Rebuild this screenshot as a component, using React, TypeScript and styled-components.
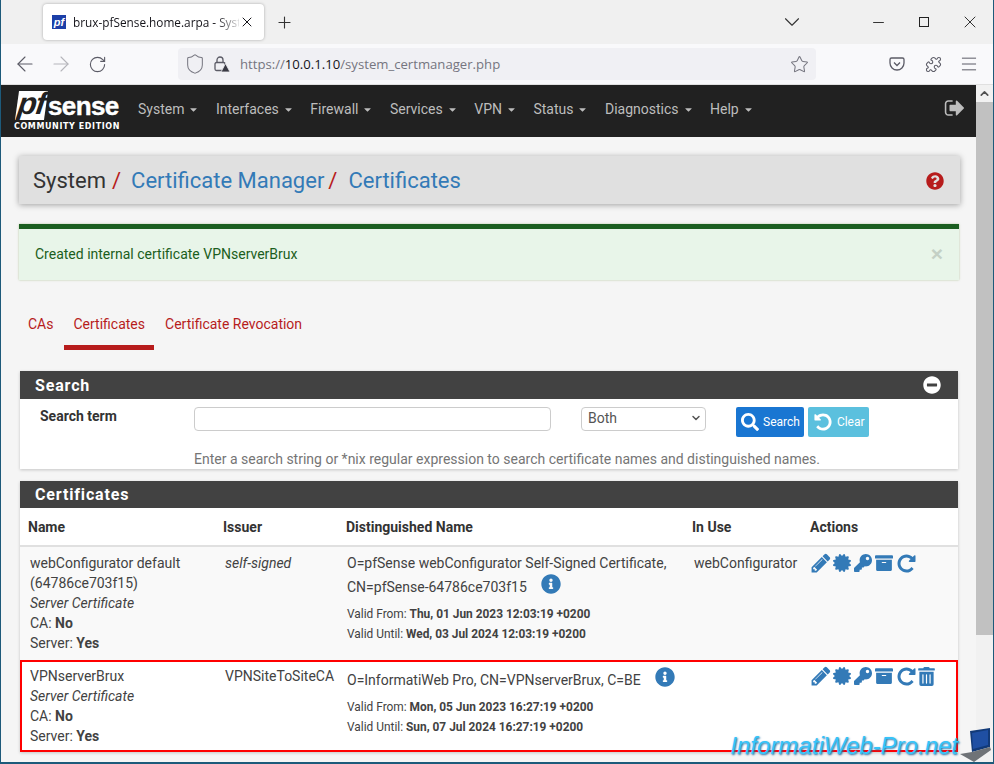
import React from 'react';
import styled, { createGlobalStyle } from 'styled-components';
import { ArrowLeft, ArrowRight, RotateCw, Shield, Star, Puzzle, Menu, ChevronDown, Plus, X, Minus, ChevronUp } from 'lucide-react';
import { FaCertificate, FaKey, FaArchive, FaTrashAlt, FaInfoCircle, FaQuestionCircle, FaMinusCircle, FaSearch, FaCaretDown } from 'react-icons/fa';

const GlobalStyle = createGlobalStyle`
  html, body { margin: 0; padding: 0; overflow: hidden; }
  * { box-sizing: border-box; }
`;

const Frame = styled.div`
  width: 994px;
  height: 764px;
  overflow: hidden;
  position: relative;
  display: flex;
  flex-direction: column;
  border-left: 1px solid #1d5a7a;
  border-right: 1px solid #1d5a7a;
  border-bottom: 2px solid #1d5a7a;
  font-family: Roboto, "Liberation Sans", sans-serif;
  font-size: 14px;
  color: #424242;
  background: #f5f5f5;
`;

const TabStrip = styled.div`
  height: 44px;
  flex: none;
  background: #f0f0f0;
  display: flex;
  align-items: center;
  padding: 0 0 0 42px;
  color: #333;
`;

const BrowserTab = styled.div`
  width: 221px;
  height: 36px;
  background: #fff;
  border-radius: 4px;
  box-shadow: 0 0 3px rgba(0, 0, 0, 0.3);
  display: flex;
  align-items: center;
  padding: 0 9px 0 9px;
  font-family: "Open Sans", "Liberation Sans", sans-serif;
  font-size: 11.8px;
  color: #15141a;
`;

const Favicon = styled.span`
  width: 14px;
  height: 14px;
  flex: none;
  margin-right: 7px;
  background: #1c3fa8;
  color: #fff;
  font: italic 700 11px/14px "Liberation Sans", sans-serif;
  text-align: center;
`;

const TabTitle = styled.span`
  flex: 1;
  min-width: 0;
  white-space: nowrap;
  -webkit-mask-image: linear-gradient(to right, #000 86%, rgba(0, 0, 0, 0.15));
  mask-image: linear-gradient(to right, #000 86%, rgba(0, 0, 0, 0.15));
`;

const TabClose = styled.span`
  display: flex;
  flex: none;
`;

const NewTab = styled.span`
  display: flex;
  margin-left: 11px;
`;

const WindowButtons = styled.div`
  margin-left: auto;
  display: flex;
  align-items: center;
`;

const ListTabs = styled.span`
  display: flex;
  margin-right: 50px;
`;

const WindowButton = styled.span`
  width: 46px;
  display: flex;
  justify-content: center;
`;

const Toolbar = styled.div`
  height: 41px;
  flex: none;
  background: #f9f9fb;
  border-bottom: 1px solid #e0e0e0;
  display: flex;
  align-items: center;
  padding: 0 0 0 6px;
  color: #5b5b66;
`;

const NavButton = styled.span<{ $off?: boolean }>`
  display: flex;
  justify-content: center;
  width: 36px;
  color: ${p => (p.$off ? '#b5b5bb' : '#5b5b66')};
`;

const UrlBar = styled.div`
  width: 638px;
  height: 32px;
  margin-left: 63px;
  background: #f0f0f4;
  border-radius: 4px;
  display: flex;
  align-items: center;
  padding: 0 7px 0 6px;
  font-family: "Open Sans", "Liberation Sans", sans-serif;
  font-size: 13.15px;
  color: #75757f;
`;

const LockIcon = styled.svg`
  margin-left: 7px;
  flex: none;
`;

const UrlText = styled.span`
  flex: 1;
  margin-left: 9px;
  b { font-weight: 400; color: #15141a; }
`;

const ToolIcons = styled.div`
  display: flex;
  align-items: center;
  margin-left: 63px;
`;

const ToolSlot = styled.span`
  width: 36px;
  display: flex;
  justify-content: center;
`;

const Body = styled.div`
  flex: 1;
  display: flex;
  min-height: 0;
`;

const Page = styled.div`
  flex: 1;
  min-width: 0;
  display: flex;
  flex-direction: column;
`;

const Scrollbar = styled.div`
  width: 17px;
  flex: none;
  background: #f1f1f1;
  display: flex;
  flex-direction: column;
  color: #505050;
`;

const ScrollArrow = styled.span`
  height: 17px;
  display: flex;
  align-items: center;
  justify-content: center;
`;

const ScrollThumb = styled.div`
  height: 533px;
  background: #c1c1c1;
`;

const NavBar = styled.div`
  height: 52px;
  flex: none;
  background: #212121;
  display: flex;
  align-items: center;
  padding: 0 10px 0 13px;
  color: #bdbdbd;
`;

const Logo = styled.div`
  width: 106px;
  margin-right: 18px;
  color: #fff;
  display: flex;
  flex-direction: column;
`;

const LogoTop = styled.div`
  display: flex;
  align-items: center;
  height: 31px;
  padding-left: 3px;
`;

const LogoPf = styled.span`
  width: 29px;
  height: 29px;
  background: #fff;
  color: #212121;
  font: italic 700 31px/25px "Liberation Sans", sans-serif;
  transform: skewX(-8deg);
  text-align: center;
  letter-spacing: -1px;
`;

const LogoSense = styled.span`
  font: 700 26px/28px "Liberation Sans", sans-serif;
  letter-spacing: -0.6px;
  margin-left: 2px;
  -webkit-text-stroke: 0.4px #fff;
`;

const LogoSub = styled.div`
  font: 700 8px/10px "DejaVu Sans", sans-serif;
  letter-spacing: 0.6px;
  white-space: nowrap;
  margin-top: 1px;
`;

const Menus = styled.div`
  display: flex;
  flex: 1;
  gap: 16.5px;
  padding-bottom: 4px;
`;

const MenuItem = styled.span`
  display: flex;
  align-items: center;
  gap: 4px;
  font-size: 14px;
`;

const LogoutIcon = styled.svg`
  margin-bottom: 6px;
`;

const Content = styled.div`
  flex: 1;
  padding: 19px 17px 0 18px;
  display: flex;
  flex-direction: column;
`;

const Breadcrumb = styled.div`
  height: 48px;
  flex: none;
  background: #e0e0e0;
  box-shadow: 0 1px 6px rgba(0, 0, 0, 0.35);
  display: flex;
  align-items: center;
  padding: 1px 16px 0 14px;
  font-size: 22px;
  margin-right: -1px;
`;

const Crumb = styled.span<{ $link?: boolean }>`
  color: ${p => (p.$link ? '#337ab7' : '#333')};
`;

const Slash = styled.span<{ $wide?: boolean }>`
  color: #b71c1c;
  margin: ${p => (p.$wide ? '0 11px 0 4px' : '0 10px 0 6px')};
`;

const Help = styled.span`
  margin-left: auto;
  display: flex;
  color: #b71c1c;
`;

const Alert = styled.div`
  height: 56px;
  flex: none;
  margin-top: 20px;
  background: #e8f5e9;
  border-top: 5px solid #1b5e20;
  box-shadow: 0 0 2px rgba(120, 160, 80, 0.5);
  color: #1b5e20;
  display: flex;
  align-items: center;
  justify-content: space-between;
  padding: 0 16px 2px 16px;
`;

const AlertClose = styled.span`
  color: #c4d0c5;
  font: 700 21px/1 "Liberation Sans", sans-serif;
`;

const TabRow = styled.div`
  display: flex;
  height: 91px;
  padding-top: 30px;
  flex: none;
`;

const PageTab = styled.span<{ $active?: boolean }>`
  color: #b71c1c;
  height: 40px;
  padding: 6px 9px 0 9px;
  margin-right: 2px;
  border-bottom: 5px solid ${p => (p.$active ? '#b71c1c' : 'transparent')};
`;

const Panel = styled.div<{ $gap?: number }>`
  flex: none;
  margin: ${p => p.$gap ?? 0}px 1px 0 1px;
  background: #fff;
  box-shadow: 0 1px 3px rgba(0, 0, 0, 0.2);
`;

const PanelHead = styled.div<{ $tall?: boolean }>`
  background: #424242;
  color: #fff;
  height: ${p => (p.$tall ? '28px' : '27px')};
  display: flex;
  align-items: center;
  justify-content: space-between;
  padding: 0 17px 0 15px;
  font-size: 16px;
  font-weight: 700;
  letter-spacing: 0.85px;
`;

const SearchForm = styled.div`
  display: grid;
  grid-template-columns: 154px 387px 155px 1fr;
  padding: 8px 0 0 20px;
  height: 70px;
  align-items: start;
`;

const SearchLabel = styled.label`
  font-weight: 700;
  padding-top: 1px;
  color: #333;
`;

const TextBox = styled.div`
  width: 357px;
  height: 24px;
  border: 1px solid #ccc;
  border-radius: 4px;
  background: #fff;
`;

const SelectBox = styled.div`
  width: 125px;
  height: 24px;
  border: 1px solid #ccc;
  border-radius: 4px;
  display: flex;
  align-items: center;
  justify-content: space-between;
  padding: 0 3px 2px 6px;
  color: #555;
`;

const Buttons = styled.div`
  display: flex;
  gap: 4px;
`;

const ActionButton = styled.span<{ $tone: string }>`
  height: 30px;
  background: ${p => p.$tone};
  color: #fff;
  border-radius: 2px;
  display: flex;
  align-items: center;
  gap: 4px;
  padding: 0 4px 0 5px;
  font-size: 12px;
`;

const SearchHint = styled.div`
  grid-column: 2 / 5;
  color: #757575;
  margin-top: 12px;
  height: 17px;
  white-space: nowrap;
`;

const Grid = styled.div`
  display: grid;
  grid-template-columns: 195px 123px 346px 118px 1fr;
`;

const HeadRow = styled(Grid)`
  height: 39px;
  border-bottom: 2px solid #e0e0e0;
  font-weight: 700;
  padding-left: 8px;
  align-items: center;
  color: #333;
`;

const CertRow = styled(Grid)<{ $hl?: boolean }>`
  padding: ${p => (p.$hl ? '4px 0 0 8px' : '6px 0 0 10px')};
  height: ${p => (p.$hl ? '92px' : '113px')};
  background: ${p => (p.$hl ? '#fff' : '#f9f9f9')};
  border: ${p => (p.$hl ? '2px solid #f00' : '0')};
  line-height: 20px;
`;

const Cell = styled.div`
  min-width: 0;
`;

const DnCell = styled.div<{ $low?: boolean }>`
  min-width: 0;
  margin-left: -1px;
  margin-top: ${p => (p.$low ? '1px' : '-1px')};
`;

const DnLine = styled.div`
  line-height: 22px;
  white-space: nowrap;
`;

const InfoIcon = styled.span<{ $gap: number; $rise: number }>`
  display: inline-flex;
  vertical-align: ${p => p.$rise}px;
  margin-left: ${p => p.$gap}px;
  color: #337ab7;
`;

const Small = styled.div<{ $first?: boolean }>`
  font-size: 11.9px;
  line-height: 20px;
  margin-top: ${p => (p.$first ? '6px' : '0')};
  white-space: nowrap;
`;

const Icons = styled.div`
  display: flex;
  gap: 3px;
  color: #337ab7;
  height: 20px;
  align-items: center;
`;

const PencilSlot = styled.span`
  display: flex;
  margin: 0 -2px;
`;

const TrashSlot = styled.span`
  display: flex;
  margin-left: -3px;
`;

const Watermark = styled.div`
  position: absolute;
  right: 35px;
  bottom: 2px;
  font: italic 400 24px/28px "Liberation Sans", sans-serif;
  color: #35c4fa;
  text-shadow: 1px 1px 2px #1f6fa8;
  white-space: nowrap;
`;

const LaptopBadge = styled.svg`
  position: absolute;
  right: 1px;
  bottom: 0;
`;

const menuNames = ['System', 'Interfaces', 'Firewall', 'Services', 'VPN', 'Status', 'Diagnostics', 'Help'];

const FaGlyph = ({ d, size }: { d: string; size: number }) => (
  <svg width={size} height={size} viewBox="0 0 1792 1792" fill="currentColor">
    <path d={d} />
  </svg>
);

const PENCIL = 'M491 1536l91-91-235-235-91 91v107h128v128h107zm523-928q0-22-22-22-10 0-17 7l-542 542q-7 7-7 17 0 22 22 22 10 0 17-7l542-542q7-7 7-17zm-54-192l416 416-832 832h-416v-416zm683 96q0 53-37 90l-166 166-416-416 166-165q36-38 90-38 53 0 91 38l235 234q37 39 37 91z';
const REPEAT = 'M1664 256v448q0 26-19 45t-45 19h-448q-42 0-59-40-17-39 14-69l138-138q-148-137-349-137-104 0-198.500 40.500t-163.500 109.500-109.500 163.500-40.500 198.500 40.500 198.500 109.500 163.500 163.500 109.500 198.500 40.500q119 0 225-52t179-147q7-10 23-12 15 0 25 9l137 138q9 8 9.500 20.500t-7.500 22.500q-109 132-264 204.500t-327 72.500q-156 0-298-61t-245-164-164-245-61-298 61-298 164-245 245-164 298-61q147 0 284.500 55.500t244.500 156.500l130-129q29-31 70-14 39 17 39 59z';
const UNDO = 'M1664 896q0 156-61 298t-164 245-245 164-298 61q-172 0-327-72.500t-264-204.500q-7-10-6.500-22.500t8.500-20.500l137-138q10-9 25-9 16 2 23 12 73 95 179 147t225 52q104 0 198.500-40.500t163.500-109.500 109.500-163.500 40.500-198.500-40.500-198.500-109.500-163.500-163.500-109.500-198.500-40.500q-98 0-188 35.500t-160 101.500l137 138q31 30 14 69-17 40-59 40h-448q-26 0-45-19t-19-45v-448q0-42 40-59 39-17 69 14l130 129q107-101 244.500-156.500t284.500-55.500q156 0 298 61t245 164 164 245 61 298z';
const SIGN_OUT = 'M704 1440q0 4 1 20t.5 26.500-3 23.500-10 19.500-20.500 6.500h-320q-119 0-203.500-84.500t-84.500-203.500v-704q0-119 84.500-203.500t203.500-84.500h320q13 0 22.500 9.500t9.500 22.500q0 4 1 20t.5 26.500-3 23.500-10 19.500-20.500 6.500h-320q-66 0-113 47t-47 113v704q0 66 47 113t113 47h312l11.500 1 11.500 3 8 5.500 7 9 2 13.500zm928-544q0 26-19 45l-544 544q-19 19-45 19t-45-19-19-45v-288h-448q-26 0-45-19t-19-45v-384q0-26 19-45t45-19h448v-288q0-26 19-45t45-19 45 19l544 544q19 19 19 45z';

const ActionIcons = ({ trash }: { trash?: boolean }) => (
  <Icons>
    <PencilSlot><FaGlyph d={PENCIL} size={22} /></PencilSlot>
    <FaCertificate size={18} />
    <FaKey size={18} />
    <FaArchive size={18} />
    <FaGlyph d={REPEAT} size={21} />
    {trash && <TrashSlot><FaTrashAlt size={19} /></TrashSlot>}
  </Icons>
);

export default function App() {
  return (
    <Frame>
      <GlobalStyle />
      <TabStrip>
        <BrowserTab>
          <Favicon>pf</Favicon>
          <TabTitle>brux-pfSense.home.arpa - Syste</TabTitle>
          <TabClose><X size={16} strokeWidth={1.5} /></TabClose>
        </BrowserTab>
        <NewTab><Plus size={19} strokeWidth={1.4} /></NewTab>
        <WindowButtons>
          <ListTabs><ChevronDown size={26} strokeWidth={1} /></ListTabs>
          <WindowButton><Minus size={17} strokeWidth={1.4} /></WindowButton>
          <WindowButton>
            <svg width="12" height="12" viewBox="0 0 12 12" fill="none" stroke="#222">
              <rect x="1.500" y="1.500" width="9" height="9" />
            </svg>
          </WindowButton>
          <WindowButton><X size={20} strokeWidth={1.2} /></WindowButton>
        </WindowButtons>
      </TabStrip>
      <Toolbar>
        <NavButton><ArrowLeft size={24} strokeWidth={1.1} /></NavButton>
        <NavButton $off><ArrowRight size={24} strokeWidth={1.1} /></NavButton>
        <NavButton><RotateCw size={19} strokeWidth={1.4} /></NavButton>
        <UrlBar>
          <Shield size={22} strokeWidth={1.1} />
          <LockIcon width="18" height="18" viewBox="0 0 18 18" fill="none" stroke="#5b5b66" strokeWidth="1.3">
            <rect x="2" y="7.500" width="10" height="8" rx="1.500" />
            <path d="M4 7.500V5a3 3 0 0 1 6 0v2.500" />
            <path d="M12.500 8.500l4.500 8.500H8z" fill="#3a3a44" stroke="#f0f0f4" strokeWidth="0.8" />
          </LockIcon>
          <UrlText>https://<b>10.0.1.10</b>/system_certmanager.php</UrlText>
          <Star size={19} strokeWidth={1.3} />
        </UrlBar>
        <ToolIcons>
          <ToolSlot>
            <svg width="16" height="16" viewBox="0 0 16 16" fill="none" stroke="#5b5b66" strokeWidth="1.3">
              <path d="M2.500 2h11a1.500 1.500 0 0 1 1.500 1.500V7a7 7 0 0 1-14 0V3.500A1.500 1.500 0 0 1 2.500 2z" />
              <path d="M5 6.500l3 3 3-3" />
            </svg>
          </ToolSlot>
          <ToolSlot><Puzzle size={17} strokeWidth={1.5} /></ToolSlot>
          <ToolSlot><Menu size={20} strokeWidth={1.2} /></ToolSlot>
        </ToolIcons>
      </Toolbar>
      <Body>
        <Page>
          <NavBar>
            <Logo>
              <LogoTop>
                <LogoPf>pf</LogoPf>
                <LogoSense>sense</LogoSense>
              </LogoTop>
              <LogoSub>COMMUNITY EDITION</LogoSub>
            </Logo>
            <Menus>
              {menuNames.map(name => (
                <MenuItem key={name}>{name}<FaCaretDown size={11} /></MenuItem>
              ))}
            </Menus>
            <LogoutIcon width="22" height="22" viewBox="0 0 1792 1792" fill="currentColor">
              <path d={SIGN_OUT} />
            </LogoutIcon>
          </NavBar>
          <Content>
            <Breadcrumb>
              <Crumb>System</Crumb><Slash>/</Slash>
              <Crumb $link>Certificate Manager</Crumb><Slash $wide>/</Slash>
              <Crumb $link>Certificates</Crumb>
              <Help><FaQuestionCircle size={18} /></Help>
            </Breadcrumb>
            <Alert>
              <span>Created internal certificate VPNserverBrux</span>
              <AlertClose>×</AlertClose>
            </Alert>
            <TabRow>
              <PageTab>CAs</PageTab>
              <PageTab $active>Certificates</PageTab>
              <PageTab>Certificate Revocation</PageTab>
            </TabRow>
            <Panel>
              <PanelHead $tall>Search<FaMinusCircle size={18} /></PanelHead>
              <SearchForm>
                <SearchLabel>Search term</SearchLabel>
                <TextBox />
                <SelectBox>Both<ChevronDown size={12} strokeWidth={3} /></SelectBox>
                <Buttons>
                  <ActionButton $tone="#1976d2"><FaSearch size={18} />Search</ActionButton>
                  <ActionButton $tone="#5bc0de"><FaGlyph d={UNDO} size={20} />Clear</ActionButton>
                </Buttons>
                <SearchHint>Enter a search string or *nix regular expression to search certificate names and distinguished names.</SearchHint>
              </SearchForm>
            </Panel>
            <Panel $gap={12}>
              <PanelHead>Certificates</PanelHead>
              <HeadRow>
                <Cell>Name</Cell>
                <Cell>Issuer</Cell>
                <Cell>Distinguished Name</Cell>
                <Cell>In Use</Cell>
                <Cell>Actions</Cell>
              </HeadRow>
              <CertRow>
                <Cell>
                  webConfigurator default<br />(64786ce703f15)<br />
                  <i>Server Certificate</i><br />
                  CA: <b>No</b><br />
                  Server: <b>Yes</b>
                </Cell>
                <Cell><i>self-signed</i></Cell>
                <DnCell>
                  <DnLine>O=pfSense webConfigurator Self-Signed Certificate,</DnLine>
                  <DnLine>CN=pfSense-64786ce703f15<InfoIcon $gap={14} $rise={-2}><FaInfoCircle size={20} /></InfoIcon></DnLine>
                  <Small $first>Valid From: <b>Thu, 01 Jun 2023 12:03:19 +0200</b></Small>
                  <Small>Valid Until: <b>Wed, 03 Jul 2024 12:03:19 +0200</b></Small>
                </DnCell>
                <Cell>webConfigurator</Cell>
                <Cell><ActionIcons /></Cell>
              </CertRow>
              <CertRow $hl>
                <Cell>
                  VPNserverBrux<br />
                  <i>Server Certificate</i><br />
                  CA: <b>No</b><br />
                  Server: <b>Yes</b>
                </Cell>
                <Cell>VPNSiteToSiteCA</Cell>
                <DnCell $low>
                  <DnLine>O=InformatiWeb Pro, CN=VPNserverBrux, C=BE<InfoIcon $gap={14} $rise={-2}><FaInfoCircle size={20} /></InfoIcon></DnLine>
                  <Small $first>Valid From: <b>Mon, 05 Jun 2023 16:27:19 +0200</b></Small>
                  <Small>Valid Until: <b>Sun, 07 Jul 2024 16:27:19 +0200</b></Small>
                </DnCell>
                <Cell />
                <Cell><ActionIcons trash /></Cell>
              </CertRow>
            </Panel>
          </Content>
        </Page>
        <Scrollbar>
          <ScrollArrow><ChevronUp size={13} strokeWidth={3} /></ScrollArrow>
          <ScrollThumb />
        </Scrollbar>
      </Body>
      <Watermark>InformatiWeb-Pro.net</Watermark>
      <LaptopBadge width="32" height="34" viewBox="0 0 32 34">
        <path d="M10 3l20-3v19L12 24z" fill="#123a78" />
        <path d="M12 5l16-3v15l-15 4z" fill="#1f4fa3" />
        <path d="M12 24l18-5 1 3-17 12L0 26z" fill="#6f7377" />
      </LaptopBadge>
    </Frame>
  );
}
